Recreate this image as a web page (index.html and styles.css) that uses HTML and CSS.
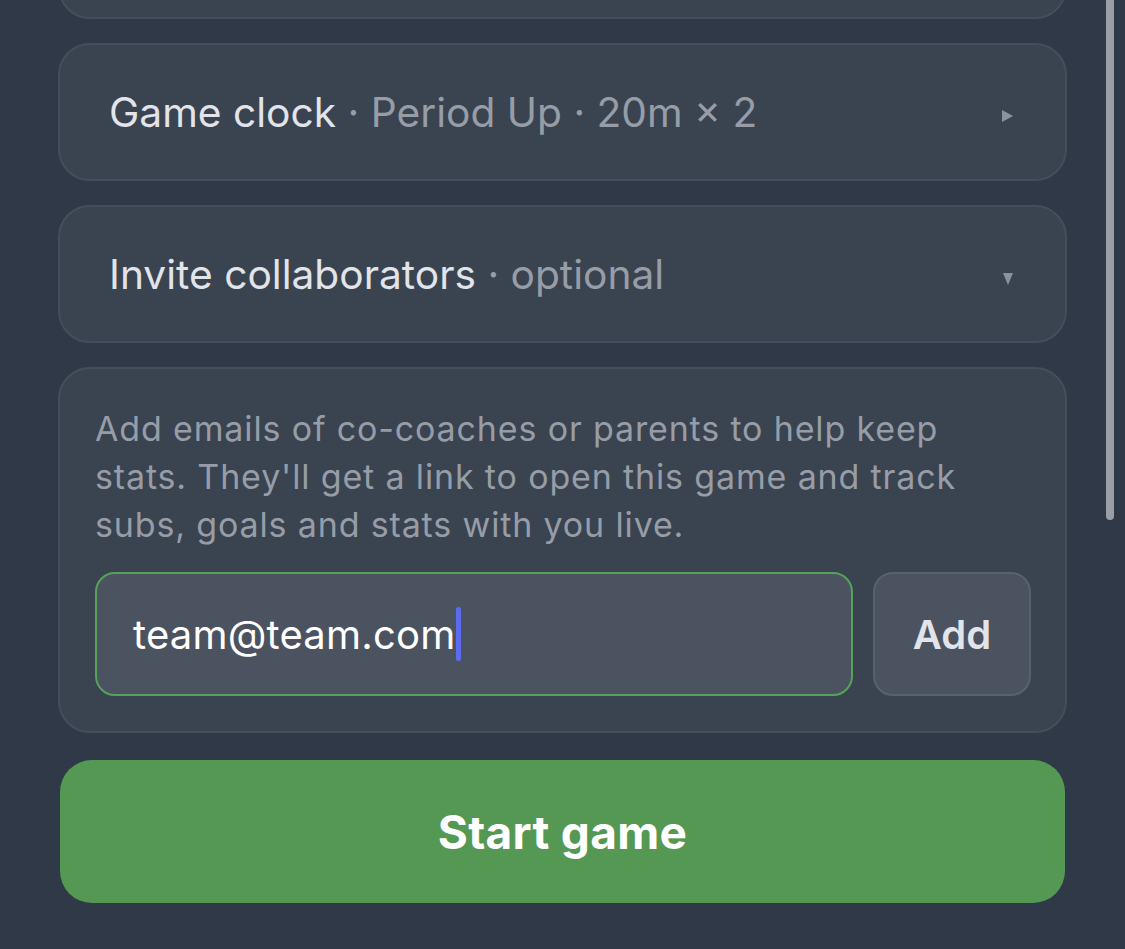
FILE: index.html
```html
<!DOCTYPE html>
<html lang="en">
<head>
  <meta charset="UTF-8">
  <meta name="viewport" content="width=device-width, initial-scale=1.0">
  <title>New game</title>
  <link rel="stylesheet" href="styles.css">
</head>
<body>
  <div class="scrollbar"></div>

  <div class="form">
    <div class="card card-top"></div>

    <div class="card section">
      <span class="section-title">Game clock <span class="muted">· Period Up · 20m × 2</span></span>
      <span class="caret caret-right"></span>
    </div>

    <div class="card section">
      <span class="section-title">Invite collaborators <span class="muted">· optional</span></span>
      <span class="caret caret-down"></span>
    </div>

    <div class="card invite">
      <p class="invite-text">Add emails of co-coaches or parents to help keep stats. They'll get a link to open this game and track subs, goals and stats with you live.</p>
      <div class="invite-row">
        <div class="email-input">
          <span>team@team.com</span><span class="cursor"></span>
        </div>
        <button class="add-btn">Add</button>
      </div>
    </div>

    <button class="start-btn">Start game</button>
  </div>
</body>
</html>
```

FILE: styles.css
```css
body {
  margin: 0;
  padding: 0;
  background-color: #2f3947;
  font-family: Inter, "Noto Sans", sans-serif;
  overflow: hidden;
}

.scrollbar {
  position: fixed;
  top: -10px;
  right: 11px;
  width: 8px;
  height: 530px;
  border-radius: 4px;
  background-color: #9a9fa7;
}

.form {
  display: flex;
  flex-direction: column;
  gap: 24px;
  padding: 0 58px;
  margin-top: -80px;
}

.card {
  background-color: #3a4350;
  border: 2px solid #454e5b;
  border-radius: 32px;
}

.card-top {
  height: 95px;
}

.section {
  height: 134px;
  display: flex;
  align-items: center;
  justify-content: space-between;
  padding: 0 52px 0 49px;
}

.section-title {
  font-size: 40.7px;
  color: #e1e4e9;
}

.muted {
  color: #979da7;
}

.caret {
  width: 0;
  height: 0;
  border-style: solid;
}

.caret-right {
  margin-top: 8px;
  border-width: 6px 0 6px 11px;
  border-color: transparent transparent transparent #8b929d;
}

.caret-down {
  margin-top: 9px;
  border-width: 12px 5.5px 0 5.5px;
  border-color: #8b929d transparent transparent transparent;
}

.invite {
  padding: 36px 34px 35px 35px;
}

.invite-text {
  margin: 0;
  font-size: 34px;
  line-height: 48px;
  color: #979da7;
  letter-spacing: 0.85px;
}

.invite-row {
  display: flex;
  gap: 20px;
  margin-top: 23px;
}

.email-input {
  flex: 1;
  height: 120px;
  display: flex;
  align-items: center;
  padding-left: 36px;
  background-color: #4b5361;
  border: 2px solid #57a25a;
  border-radius: 20px;
  font-size: 40px;
  letter-spacing: 0.2px;
  color: #ffffff;
}

.cursor {
  width: 5px;
  height: 54px;
  margin-left: 1px;
  border-radius: 3px;
  background-color: #5b6cf0;
}

.add-btn {
  width: 158px;
  height: 124px;
  background-color: #4b5361;
  border: 2px solid #59616e;
  border-radius: 20px;
  font-family: Inter, "Noto Sans", sans-serif;
  font-size: 40px;
  font-weight: 600;
  color: #e1e4e9;
}

.start-btn {
  margin: 3px 2px 0;
  height: 143px;
  border: none;
  border-radius: 32px;
  background-color: #549853;
  font-family: Inter, "Noto Sans", sans-serif;
  font-size: 46px;
  font-weight: 700;
  letter-spacing: 0.3px;
  color: #ffffff;
}
```
